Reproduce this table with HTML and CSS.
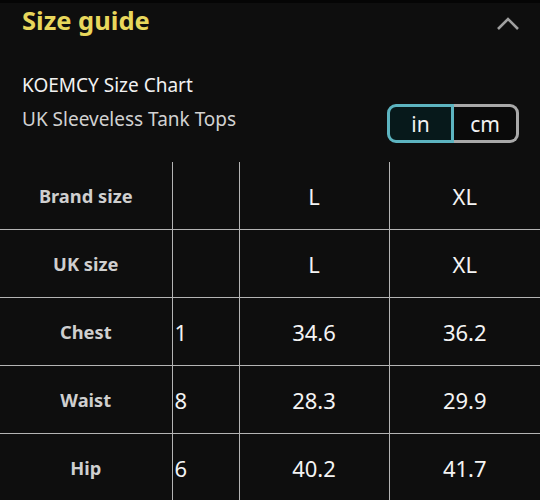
FILE: index.html
```html
<!DOCTYPE html>
<html>
<head>
<meta charset="utf-8">
<link rel="stylesheet" href="styles.css">
</head>
<body>
<div class="page">
  <div class="header">
    <h1 class="title">Size guide</h1>
    <svg class="chevron" width="26" height="16" viewBox="0 0 26 16"><polyline points="2,13 12,3 22,13" fill="none" stroke="#a0a0a0" stroke-width="2.6"/></svg>
  </div>
  <div class="sub">
    <div class="sub-text">
      <div class="brand">KOEMCY Size Chart</div>
      <div class="kind">UK Sleeveless Tank Tops</div>
    </div>
    <div class="toggle">
      <div class="seg seg-on">in</div>
      <div class="seg seg-off">cm</div>
    </div>
  </div>
  <table class="chart">
    <colgroup>
      <col class="c1"><col class="c2"><col class="c3"><col class="c4">
    </colgroup>
    <tr><th>Brand size</th><td class="idx"></td><td>L</td><td>XL</td></tr>
    <tr><th>UK size</th><td class="idx"></td><td>L</td><td>XL</td></tr>
    <tr><th>Chest</th><td class="idx">1</td><td>34.6</td><td>36.2</td></tr>
    <tr><th>Waist</th><td class="idx">8</td><td>28.3</td><td>29.9</td></tr>
    <tr><th>Hip</th><td class="idx">6</td><td>40.2</td><td>41.7</td></tr>
  </table>
</div>
</body>
</html>
```
FILE: styles.css
```css
html, body {
  margin: 0;
  padding: 0;
  background: #0e0e0e;
}
.page {
  font-family: "Noto Sans", "Open Sans", sans-serif;
  color: #f0f0f0;
  border-top: 3px solid #050505;
  width: 540px;
  overflow: hidden;
}
.header {
  display: flex;
  justify-content: space-between;
  align-items: center;
  height: 34px;
  padding: 0 18px 0 22px;
}
.title {
  margin: 0;
  font-size: 25.5px;
  font-weight: 700;
  color: #e8d75c;
  line-height: 34px;
}
.chevron {
  display: block;
  margin-top: 8px;
}
.sub {
  display: flex;
  justify-content: space-between;
  align-items: flex-start;
  padding: 31px 21px 19px 22px;
}
.brand {
  font-size: 19px;
  line-height: 34px;
  color: #f2f2f2;
}
.kind {
  font-size: 19px;
  line-height: 34px;
  color: #d2d2d2;
}
.toggle {
  display: flex;
  height: 39px;
  margin-top: 36px;
}
.seg {
  box-sizing: border-box;
  height: 39px;
  display: flex;
  align-items: center;
  justify-content: center;
  font-size: 21px;
  color: #f2f2f2;
}
.seg-on {
  width: 67px;
  border: 3px solid #5db4c0;
  border-radius: 9px 0 0 9px;
  background: #07191b;
}
.seg-off {
  width: 65px;
  border: 3px solid #a9a9a9;
  border-left: none;
  border-radius: 0 9px 9px 0;
  background: #0a0a0a;
}
.chart {
  border-collapse: collapse;
  width: 540px;
  table-layout: fixed;
}
.c1 { width: 172px; }
.c2 { width: 67px; }
.c3 { width: 150px; }
.c4 { width: 151px; }
.chart th, .chart td {
  height: 67px;
  padding: 0;
  border: 1px solid #b4b4b4;
  border-top: none;
  text-align: center;
  vertical-align: middle;
}
.chart tr:last-child th, .chart tr:last-child td {
  border-bottom: none;
}
.chart th {
  border-left: none;
  font-size: 18.3px;
  font-weight: 700;
  color: #cfcfcf;
}
.chart td {
  font-size: 22px;
  color: #f4f4f4;
}
.chart td:last-child {
  border-right: none;
}
.chart td.idx {
  text-align: left;
  padding-left: 2px;
}
```
